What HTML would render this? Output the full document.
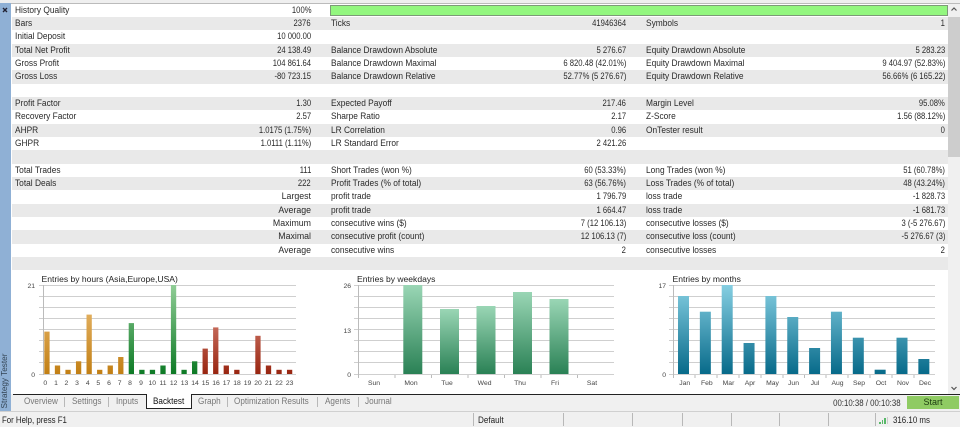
<!DOCTYPE html>
<html><head><meta charset="utf-8"><style>
html,body{margin:0;padding:0;width:960px;height:427px;overflow:hidden;background:#fff}
body{position:relative;font:8.8px "Liberation Sans",sans-serif;color:#2a2a2a}
.a{position:absolute}
.r{position:absolute;left:12px;width:936px;height:13.33px;line-height:13.33px;white-space:nowrap}
.g{background:#e9e9e9}
.r span{position:absolute;top:0}
.l1,.l2,.l3{transform:scaleX(.95);transform-origin:left center}
.v1,.v2,.v3{transform:scaleX(.87);transform-origin:right center}
.r span.w{transform:none}
.l1{left:3px}.v1{right:637px}.l2{left:318.5px}.v2{right:322px}.l3{left:634px}.v3{right:3px}
.t{position:absolute;top:395px;height:14px;line-height:13px;color:#777;white-space:nowrap;font-size:9px;transform:scaleX(.905);transform-origin:left center}
.s{position:absolute;width:1px;background:#b8b8b8}
</style></head><body>
<div class="a" style="left:0;top:0;width:960px;height:3px;background:#efefef;border-bottom:1px solid #bbb"></div>
<div class="a" style="left:0;top:3px;width:11px;height:408px;background:#8fb0d5"></div>

<div class="r" style="top:3.67px"><span class="l1">History Quality</span><span class="v1">100%</span></div>
<div class="a" style="left:330px;top:5px;width:616px;height:9px;background:#93f77f;border:1px solid #7d9a78"></div>
<div class="r g" style="top:17px"><span class="l1">Bars</span><span class="v1">2376</span><span class="l2">Ticks</span><span class="v2">41946364</span><span class="l3">Symbols</span><span class="v3">1</span></div>
<div class="r" style="top:30.33px"><span class="l1">Initial Deposit</span><span class="v1">10 000.00</span></div>
<div class="r g" style="top:43.67px"><span class="l1">Total Net Profit</span><span class="v1">24 138.49</span><span class="l2">Balance Drawdown Absolute</span><span class="v2">5 276.67</span><span class="l3">Equity Drawdown Absolute</span><span class="v3">5 283.23</span></div>
<div class="r" style="top:57px"><span class="l1">Gross Profit</span><span class="v1">104 861.64</span><span class="l2">Balance Drawdown Maximal</span><span class="v2">6 820.48 (42.01%)</span><span class="l3">Equity Drawdown Maximal</span><span class="v3">9 404.97 (52.83%)</span></div>
<div class="r g" style="top:70.33px"><span class="l1">Gross Loss</span><span class="v1">-80 723.15</span><span class="l2">Balance Drawdown Relative</span><span class="v2">52.77% (5 276.67)</span><span class="l3">Equity Drawdown Relative</span><span class="v3">56.66% (6 165.22)</span></div>
<div class="r" style="top:83.67px"></div>
<div class="r g" style="top:97px"><span class="l1">Profit Factor</span><span class="v1">1.30</span><span class="l2">Expected Payoff</span><span class="v2">217.46</span><span class="l3">Margin Level</span><span class="v3">95.08%</span></div>
<div class="r" style="top:110.33px"><span class="l1">Recovery Factor</span><span class="v1">2.57</span><span class="l2">Sharpe Ratio</span><span class="v2">2.17</span><span class="l3">Z-Score</span><span class="v3">1.56 (88.12%)</span></div>
<div class="r g" style="top:123.67px"><span class="l1">AHPR</span><span class="v1">1.0175 (1.75%)</span><span class="l2">LR Correlation</span><span class="v2">0.96</span><span class="l3">OnTester result</span><span class="v3">0</span></div>
<div class="r" style="top:137px"><span class="l1">GHPR</span><span class="v1">1.0111 (1.11%)</span><span class="l2">LR Standard Error</span><span class="v2">2 421.26</span></div>
<div class="r g" style="top:150.33px"></div>
<div class="r" style="top:163.67px"><span class="l1">Total Trades</span><span class="v1">111</span><span class="l2">Short Trades (won %)</span><span class="v2">60 (53.33%)</span><span class="l3">Long Trades (won %)</span><span class="v3">51 (60.78%)</span></div>
<div class="r g" style="top:177px"><span class="l1">Total Deals</span><span class="v1">222</span><span class="l2">Profit Trades (% of total)</span><span class="v2">63 (56.76%)</span><span class="l3">Loss Trades (% of total)</span><span class="v3">48 (43.24%)</span></div>
<div class="r" style="top:190.33px"><span class="v1 w">Largest</span><span class="l2">profit trade</span><span class="v2">1 796.79</span><span class="l3">loss trade</span><span class="v3">-1 828.73</span></div>
<div class="r g" style="top:203.67px"><span class="v1 w">Average</span><span class="l2">profit trade</span><span class="v2">1 664.47</span><span class="l3">loss trade</span><span class="v3">-1 681.73</span></div>
<div class="r" style="top:217px"><span class="v1 w">Maximum</span><span class="l2">consecutive wins ($)</span><span class="v2">7 (12 106.13)</span><span class="l3">consecutive losses ($)</span><span class="v3">3 (-5 276.67)</span></div>
<div class="r g" style="top:230.33px"><span class="v1 w">Maximal</span><span class="l2">consecutive profit (count)</span><span class="v2">12 106.13 (7)</span><span class="l3">consecutive loss (count)</span><span class="v3">-5 276.67 (3)</span></div>
<div class="r" style="top:243.67px"><span class="v1 w">Average</span><span class="l2">consecutive wins</span><span class="v2">2</span><span class="l3">consecutive losses</span><span class="v3">2</span></div>
<div class="r g" style="top:257px"></div>

<div class="a" style="left:948px;top:4px;width:12px;height:390px;background:#f0f0f0"></div>
<div class="a" style="left:948px;top:17px;width:12px;height:140px;background:#cdcdcd"></div>

<svg class="a" style="left:0;top:0" width="960" height="427" viewBox="0 0 960 427" font-family="Liberation Sans, sans-serif">
<defs>
<linearGradient id="o" gradientUnits="userSpaceOnUse" x1="0" y1="285" x2="0" y2="374"><stop offset="0" stop-color="#f0c47e"/><stop offset="1" stop-color="#c27f14"/></linearGradient>
<linearGradient id="gr" gradientUnits="userSpaceOnUse" x1="0" y1="285" x2="0" y2="374"><stop offset="0" stop-color="#90cd96"/><stop offset="1" stop-color="#0d7a25"/></linearGradient>
<linearGradient id="rd" gradientUnits="userSpaceOnUse" x1="0" y1="315" x2="0" y2="374"><stop offset="0" stop-color="#d0796a"/><stop offset="1" stop-color="#982510"/></linearGradient>
<linearGradient id="w" x1="0" y1="0" x2="0" y2="1"><stop offset="0" stop-color="#9ad6b5"/><stop offset="1" stop-color="#2a8155"/></linearGradient>
<linearGradient id="m" gradientUnits="userSpaceOnUse" x1="0" y1="285" x2="0" y2="374"><stop offset="0" stop-color="#86cfe2"/><stop offset="1" stop-color="#076a8a"/></linearGradient>
</defs>
<path fill="none" stroke="#223" stroke-width="1.400" d="M3 8L7 12M7 8L3 12"/>
<path fill="none" stroke="#555" stroke-width="1.200" d="M951.500 10.500 L954 8 L956.500 10.500 M951.500 387 L954 389.500 L956.500 387"/>
<g stroke="#cfcfcf" fill="none">
<path d="M39 285.500H296M39 296.500H296M39 307.500H296M39 318.500H296M39 329.500H296M39 340.500H296M39 351.500H296M39 362.500H296M39 374.500H296"/>
<path d="M354 285.500H614M354 296.500H614M354 307.500H614M354 318.500H614M354 329.500H614M354 340.500H614M354 351.500H614M354 362.500H614M354 374.500H614"/>
<path d="M669 285.500H935M669 296.500H935M669 307.500H935M669 318.500H935M669 329.500H935M669 340.500H935M669 351.500H935M669 362.500H935M669 374.500H935"/>
<path stroke="#bbb" d="M43.500 285V375M358.500 285V378M395 375V378M431.500 375V378M468 375V378M504.500 375V378M541 375V378M577.500 375V378M673.500 285V378M695 375V378M717 375V378M739 375V378M761 375V378M783 375V378M804.500 375V378M826 375V378M848 375V378M870 375V378M892 375V378M914 375V378"/>
</g>
<g fill="url(#o)">
<rect x="44.300" y="331.600" width="5.300" height="42.400"/><rect x="54.850" y="365.500" width="5.300" height="8.500"/><rect x="65.400" y="369.800" width="5.300" height="4.200"/><rect x="75.950" y="361.300" width="5.300" height="12.700"/><rect x="86.500" y="314.600" width="5.300" height="59.400"/><rect x="97.050" y="369.800" width="5.300" height="4.200"/><rect x="107.600" y="365.500" width="5.300" height="8.500"/><rect x="118.150" y="357" width="5.300" height="17"/>
</g>
<g fill="url(#gr)">
<rect x="128.700" y="323.100" width="5.300" height="50.900"/><rect x="139.250" y="369.800" width="5.300" height="4.200"/><rect x="149.800" y="369.800" width="5.300" height="4.200"/><rect x="160.350" y="365.500" width="5.300" height="8.500"/><rect x="170.900" y="285" width="5.300" height="89"/><rect x="181.450" y="369.800" width="5.300" height="4.200"/><rect x="192" y="361.300" width="5.300" height="12.700"/>
</g>
<g fill="url(#rd)">
<rect x="202.550" y="348.600" width="5.300" height="25.400"/><rect x="213.100" y="327.400" width="5.300" height="46.600"/><rect x="223.650" y="365.500" width="5.300" height="8.500"/><rect x="234.200" y="369.800" width="5.300" height="4.200"/><rect x="255.300" y="335.800" width="5.300" height="38.200"/><rect x="265.850" y="365.500" width="5.300" height="8.500"/><rect x="276.400" y="369.800" width="5.300" height="4.200"/><rect x="286.950" y="369.800" width="5.300" height="4.200"/>
</g>
<g fill="url(#w)">
<rect x="403.300" y="285" width="19" height="89"/><rect x="440" y="309" width="19" height="65"/><rect x="476.500" y="306" width="19" height="68"/><rect x="513" y="292" width="19" height="82"/><rect x="549.500" y="299" width="19" height="75"/>
</g>
<g fill="url(#m)">
<rect x="678" y="296" width="11" height="78"/><rect x="699.850" y="311.700" width="11" height="62.300"/><rect x="721.700" y="285" width="11" height="89"/><rect x="743.550" y="343" width="11" height="31"/><rect x="765.400" y="296" width="11" height="78"/><rect x="787.250" y="317" width="11" height="57"/><rect x="809.100" y="348" width="11" height="26"/><rect x="830.950" y="311.700" width="11" height="62.300"/><rect x="852.800" y="337.700" width="11" height="36.300"/><rect x="874.650" y="369.700" width="11" height="4.300"/><rect x="896.500" y="337.700" width="11" height="36.300"/><rect x="918.350" y="359" width="11" height="15"/>
</g>
<g font-size="8.550" fill="#222">
<text x="41.500" y="282">Entries by hours (Asia,Europe,USA)</text>
<text x="357" y="282">Entries by weekdays</text>
<text x="672.500" y="282">Entries by months</text>
</g>
<g font-size="6.800" fill="#444" text-anchor="end">
<text x="35" y="288">21</text><text x="35" y="377">0</text>
<text x="351" y="288">26</text><text x="351" y="333">13</text><text x="351" y="377">0</text>
<text x="666" y="288">17</text><text x="666" y="377">0</text>
</g>
<g font-size="6.800" fill="#444" text-anchor="middle">
<text x="45.300" y="385">0</text><text x="56" y="385">1</text><text x="66.400" y="385">2</text><text x="77" y="385">3</text><text x="87.800" y="385">4</text><text x="98.300" y="385">5</text><text x="109" y="385">6</text><text x="119.700" y="385">7</text><text x="130" y="385">8</text><text x="141" y="385">9</text><text x="152.300" y="385">10</text><text x="163" y="385">11</text><text x="173.700" y="385">12</text><text x="184.500" y="385">13</text><text x="195" y="385">14</text><text x="205.500" y="385">15</text><text x="216" y="385">16</text><text x="226.500" y="385">17</text><text x="237" y="385">18</text><text x="247.500" y="385">19</text><text x="258" y="385">20</text><text x="268.500" y="385">21</text><text x="279" y="385">22</text><text x="289.700" y="385">23</text>
<text x="374" y="385">Sun</text><text x="411" y="385">Mon</text><text x="447" y="385">Tue</text><text x="484.600" y="385">Wed</text><text x="520" y="385">Thu</text><text x="555" y="385">Fri</text><text x="592" y="385">Sat</text>
<text x="684.700" y="385">Jan</text><text x="706.800" y="385">Feb</text><text x="728.500" y="385">Mar</text><text x="750" y="385">Apr</text><text x="772.500" y="385">May</text><text x="793.500" y="385">Jun</text><text x="815" y="385">Jul</text><text x="837.500" y="385">Aug</text><text x="859" y="385">Sep</text><text x="881" y="385">Oct</text><text x="903" y="385">Nov</text><text x="925" y="385">Dec</text>
</g>
</svg>

<div class="a" style="left:0;top:394px;width:960px;height:33px;background:#f0f0f0"></div>
<div class="a" style="left:0;top:394px;width:11px;height:17px;background:#8fb0d5"></div>
<div class="a" style="left:-23px;top:375px;width:56px;height:12px;line-height:12px;transform:rotate(-90deg);font-size:8.200px;color:#345;text-align:center;white-space:nowrap">Strategy Tester</div>
<div class="a" style="left:13px;top:394px;width:947px;height:1px;background:#222"></div>
<div class="a" style="left:0;top:411px;width:960px;height:1px;background:#d0d0d0"></div>
<div class="a" style="left:146px;top:394px;width:44px;height:14px;background:#fff;border:1px solid #222;border-top:none"></div>
<div class="t" style="left:24px">Overview</div>
<div class="t" style="left:72px">Settings</div>
<div class="t" style="left:115.500px">Inputs</div>
<div class="t" style="left:153px;color:#111">Backtest</div>
<div class="t" style="left:198px">Graph</div>
<div class="t" style="left:234px">Optimization Results</div>
<div class="t" style="left:325px">Agents</div>
<div class="t" style="left:365px">Journal</div>
<div class="s" style="left:64px;top:397px;height:10px"></div>
<div class="s" style="left:108px;top:397px;height:10px"></div>
<div class="s" style="left:227px;top:397px;height:10px"></div>
<div class="s" style="left:317px;top:397px;height:10px"></div>
<div class="s" style="left:358px;top:397px;height:10px"></div>
<div class="a" style="right:59px;top:396px;line-height:14px;font-size:9px;color:#333;transform:scaleX(.87);transform-origin:right center;white-space:nowrap">00:10:38 / 00:10:38</div>
<div class="a" style="left:907px;top:396px;width:52px;height:13px;line-height:13px;background:#8fcb63;text-align:center;color:#1c3a10;font-size:9px">Start</div>
<div class="a" style="left:2px;top:413px;line-height:14px;color:#222;font-size:9px;transform:scaleX(.87);transform-origin:left center;white-space:nowrap">For Help, press F1</div>
<div class="a" style="left:477.500px;top:413px;line-height:14px;color:#222;font-size:9px;transform:scaleX(.9);transform-origin:left center">Default</div>
<div class="s" style="left:473px;top:413px;height:13px"></div>
<div class="s" style="left:563px;top:413px;height:13px"></div>
<div class="s" style="left:632px;top:413px;height:13px"></div>
<div class="s" style="left:682px;top:413px;height:13px"></div>
<div class="s" style="left:731px;top:413px;height:13px"></div>
<div class="s" style="left:779px;top:413px;height:13px"></div>
<div class="s" style="left:828px;top:413px;height:13px"></div>
<div class="s" style="left:875px;top:413px;height:13px"></div>
<div class="a" style="left:879px;top:422px;width:1.500px;height:2px;background:#58b868"></div>
<div class="a" style="left:881.500px;top:420px;width:1.500px;height:4px;background:#58b868"></div>
<div class="a" style="left:884px;top:418px;width:1.500px;height:6px;background:#58b868"></div>
<div class="a" style="left:886.500px;top:417px;width:1px;height:7px;background:#ccc"></div>
<div class="a" style="left:893px;top:413px;line-height:14px;color:#222;font-size:9px;transform:scaleX(.88);transform-origin:left center;white-space:nowrap">316.10 ms</div>
</body></html>
